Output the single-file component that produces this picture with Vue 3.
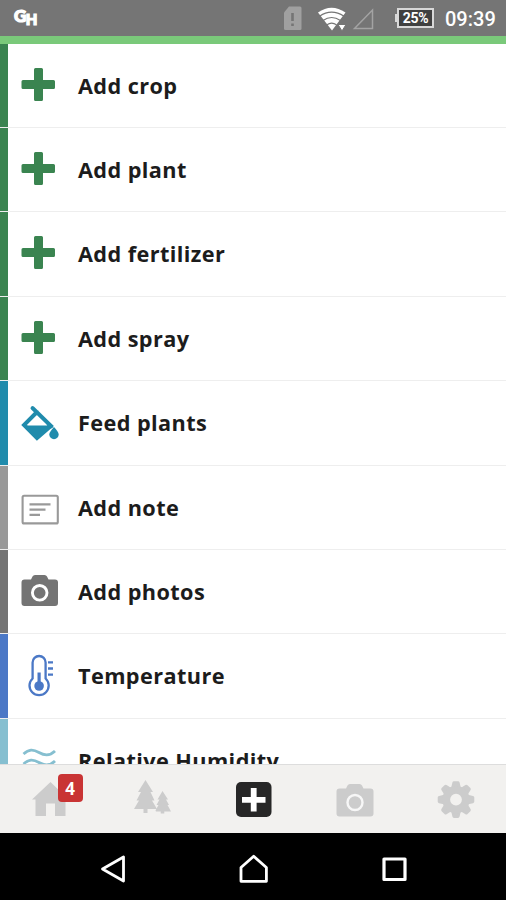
<script setup>
const rows = [
  { label: 'Add crop', icon: 'plus', tone: 'green' },
  { label: 'Add plant', icon: 'plus', tone: 'green' },
  { label: 'Add fertilizer', icon: 'plus', tone: 'green' },
  { label: 'Add spray', icon: 'plus', tone: 'green' },
  { label: 'Feed plants', icon: 'bucket', tone: 'blue' },
  { label: 'Add note', icon: 'note', tone: 'silver' },
  { label: 'Add photos', icon: 'camera', tone: 'gray' },
  { label: 'Temperature', icon: 'thermometer', tone: 'indigo' },
  { label: 'Relative Humidity', icon: 'waves', tone: 'aqua' }
]
const teeth = [0, 45, 90, 135, 180, 225, 270, 315]
</script>

<template>
  <div class="screen">
    <header class="status">
      <div class="brand"><span class="g">G</span><span class="h">H</span></div>
      <svg class="signals" viewBox="280 0 100 36">
        <path d="M289 6.500H300Q301.500 6.500 301.500 8V28.500Q301.500 30 300 30H285.500Q284 30 284 28.500V12.500Z" fill="#a0a0a0" />
        <path d="M292.500 13V21M292.500 23.500V26" stroke="#757575" stroke-width="2.600" />
        <path d="M318 12.500Q331.500 3 345.500 12.500L332 30.500Z" fill="#fff" />
        <path d="M319.500 16.200Q331.500 8 344 16.200M323 20.500Q331.500 14.500 340.500 20.500M327 24.800Q331.500 21.500 336.500 24.800" fill="none" stroke="#757575" stroke-width="1.100" />
        <path d="M338 24.500H346L342 31Z" fill="#fff" stroke="#757575" stroke-width="1" />
        <path d="M354.500 28.500L372.500 10V28.500Z" fill="none" stroke="#a3a3a3" stroke-width="1.500" />
      </svg>
      <div class="battery"><span>25%</span></div>
      <time>09:39</time>
    </header>
    <div class="accent"></div>

    <main class="list">
      <div v-for="row in rows" :key="row.label" class="row" :class="row.tone">
        <i class="stripe"></i>
        <svg class="icon" viewBox="8 0 70 84">
          <path v-if="row.icon === 'plus'" d="M35.500 24H41.500Q43 24 43 25.500V36H53.500Q55 36 55 37.500V43.500Q55 45 53.500 45H43V55.500Q43 57 41.500 57H35.500Q34 57 34 55.500V45H23Q21.500 45 21.500 43.500V37.500Q21.500 36 23 36H34V25.500Q34 24 35.500 24Z" fill="currentColor" />
          <g v-else-if="row.icon === 'bucket'">
            <path d="M32.500 27L51 45L37 57L24 44L37 31" fill="none" stroke="currentColor" stroke-width="3.900" stroke-linecap="round" />
            <path d="M23 44.500H51L37 58.500Z" fill="currentColor" />
            <path d="M47 44Q50 43 52 47" fill="none" stroke="currentColor" stroke-width="3" />
            <path d="M54 46Q58.700 51 58.700 53.500A4.700 4.700 0 0 1 49.300 53.500Q49.300 51 54 46Z" fill="currentColor" />
          </g>
          <g v-else-if="row.icon === 'note'" fill="none" stroke="currentColor" stroke-width="2.100">
            <rect x="22.600" y="29.800" width="35.200" height="27.600" rx="1.500" />
            <path d="M29.500 38.400H50.500M29.500 43.600H45.500M29.500 48.900H40" />
          </g>
          <g v-else-if="row.icon === 'camera'">
            <path d="M31 29.500L32.500 26.500Q33.200 25 35 25H44.500Q46.300 25 47 26.500L48.500 29.500H55Q58 29.500 58 32.500V53Q58 56 55 56H24.500Q21.500 56 21.500 53V32.500Q21.500 29.500 24.500 29.500Z" fill="currentColor" />
            <circle cx="39.700" cy="42.800" r="7.300" fill="none" stroke="#fff" stroke-width="2.900" />
          </g>
          <g v-else-if="row.icon === 'thermometer'" fill="none" stroke="currentColor" stroke-width="2.300">
            <path d="M32.600 44.500V28.500A6.500 6.500 0 0 1 45.600 28.500V44.500A9.600 9.600 0 1 1 32.600 44.500Z" />
            <circle cx="39.100" cy="52" r="4.800" fill="currentColor" stroke="none" />
            <path d="M39.100 52V38.500" stroke-width="3.200" />
            <path d="M48 28.400H53M48 34.500H53M48 40.600H53" />
          </g>
          <path v-else d="M23.500 35C29 30 33 30 39 33.500S50 37 55 32M23.500 45C29 40 33 40 39 43.500S50 47 55 42M23.500 55C29 50 33 50 39 53.500S50 57 55 52" fill="none" stroke="currentColor" stroke-width="2.800" />
        </svg>
        <span class="label">{{ row.label }}</span>
      </div>
    </main>

    <nav class="tabs">
      <div class="tab">
        <div class="home">
          <svg width="40" height="40" viewBox="31.500 780 40 40">
            <path d="M51 782L69 799.500H66V816H55.500V803.500H46.500V816H36V799.500H32.500Z" fill="#ccc" />
          </svg>
          <span class="badge">4</span>
        </div>
      </div>
      <div class="tab">
        <svg width="40" height="40" viewBox="132 780.500 40 40" fill="#ccc">
          <path d="M145.500 780.500L153 792.500H150.500L154.500 801H152L157 809.500H147.500V813.500H143.500V809.500H134L139 801H136.500L141 792.500H138Z" />
          <path d="M162.500 791.500L168 800H166L169 805.500H167.500L171 812H164.300V814H160.700V812H156L155.500 811L158.500 805.500H156.500L159.500 800H157.500Z" />
        </svg>
      </div>
      <div class="tab">
        <svg width="40" height="40" viewBox="233 780 40 40">
          <rect x="236" y="782" width="35.500" height="35" rx="5" fill="#272727" />
          <path d="M253.700 788V811.500M242 799.800H265.500" stroke="#fff" stroke-width="5.800" />
        </svg>
      </div>
      <div class="tab">
        <svg width="40" height="40" viewBox="334 780 40 40">
          <path d="M346 788.500L347.500 785.500Q348.200 784 350 784H359.500Q361.300 784 362 785.500L363.500 788.500H370.500Q373.500 788.500 373.500 791.500V813.500Q373.500 816.500 370.500 816.500H339.500Q336.500 816.500 336.500 813.500V791.500Q336.500 788.500 339.500 788.500Z" fill="#ccc" />
          <circle cx="355" cy="802.500" r="7.500" fill="none" stroke="#f7f7f7" stroke-width="2.400" />
        </svg>
      </div>
      <div class="tab">
        <svg width="40" height="40" viewBox="-21 -19.600 40 40">
          <path v-for="a in teeth" :key="a" :transform="`rotate(${a})`" d="M-5 -11L-3.600 -17Q-3.300 -18.300 -2 -18.300H2Q3.300 -18.300 3.600 -17L5 -11Z" fill="#ccc" />
          <circle r="9.800" fill="none" stroke="#ccc" stroke-width="7.800" />
        </svg>
      </div>
    </nav>

    <footer class="system">
      <svg viewBox="0 833 506 67" fill="none" stroke="#fff" stroke-width="2.800" stroke-linejoin="round">
        <path d="M123.500 857V881L102.500 869Z" />
        <path d="M241 881.300V867.500L253.700 856.300L266.400 867.500V881.300Z" />
        <rect x="384" y="859" width="21" height="20.500" stroke-width="3.200" />
      </svg>
    </footer>
  </div>
</template>

<style>
body {
  margin: 0;
}
</style>

<style scoped>
.screen {
  width: 506px;
  height: 900px;
  display: flex;
  flex-direction: column;
  overflow: hidden;
  background: #fff;
  font-family: "Open Sans", sans-serif;
}
.status {
  flex: 0 0 36px;
  height: 36px;
  box-sizing: border-box;
  display: flex;
  align-items: center;
  padding: 0 11px 0 14px;
  background: #757575;
  color: #fff;
  font-family: Roboto, sans-serif;
}
.brand {
  display: flex;
  flex: 1;
  font: 900 17px/20px Lato, sans-serif;
  -webkit-text-stroke: 1.2px #fff;
}
.brand .g {
  margin-top: -1px;
}
.brand .h {
  font-size: 15px;
  margin: 2px 0 0 -0.5px;
}
.signals {
  width: 100px;
  height: 36px;
  margin-right: 17px;
}
.battery {
  box-sizing: border-box;
  width: 37px;
  height: 20px;
  border: 2px solid #d8d8d8;
  background: #404040;
  display: flex;
  align-items: center;
  justify-content: center;
  font-size: 14px;
  font-weight: 700;
  letter-spacing: -0.3px;
  position: relative;
}
.battery::before {
  content: "";
  position: absolute;
  left: -4px;
  top: 4px;
  width: 2px;
  height: 8px;
  background: #d8d8d8;
}
time {
  width: 50px;
  margin-left: 11px;
  font-size: 20px;
  font-weight: 500;
  line-height: 34px;
  padding-top: 2px;
  white-space: nowrap;
}
.accent {
  flex: 0 0 7.600px;
  background: #7ac97a;
}
.list {
  flex: 1 1 0;
  min-height: 0;
  overflow: hidden;
}
.row {
  display: flex;
  height: 84.400px;
  box-sizing: border-box;
  align-items: stretch;
  border-bottom: 1px solid #eee;
}
.stripe {
  width: 7.500px;
  background: currentColor;
}
.icon {
  width: 70px;
  height: 84px;
  margin-left: 0.500px;
}
.label {
  color: #1c1c1c;
  font-size: 21.700px;
  font-weight: 700;
  letter-spacing: 0.400px;
  line-height: 83.600px;
  white-space: nowrap;
}
.green { color: #3a8450; }
.blue { color: #208bac; }
.silver { color: #999; }
.gray { color: #747474; }
.indigo { color: #4b78c6; }
.aqua { color: #86bfd0; }
.tabs {
  flex: 0 0 69px;
  box-sizing: border-box;
  display: grid;
  grid-template-columns: repeat(5, 1fr);
  border-top: 1px solid #ddd;
  background: #f2f1ef;
}
.tab {
  display: flex;
  justify-content: center;
  padding-top: 15px;
}
.home {
  position: relative;
  height: 40px;
}
.badge {
  position: absolute;
  left: 27px;
  top: -6px;
  width: 25px;
  height: 28px;
  border-radius: 4px;
  background: #c93434;
  color: #fff;
  font-size: 17px;
  font-weight: 700;
  line-height: 30px;
  text-align: center;
}
.system {
  flex: 0 0 67px;
  background: #000;
}
.system svg {
  display: block;
  width: 506px;
  height: 67px;
}
</style>
